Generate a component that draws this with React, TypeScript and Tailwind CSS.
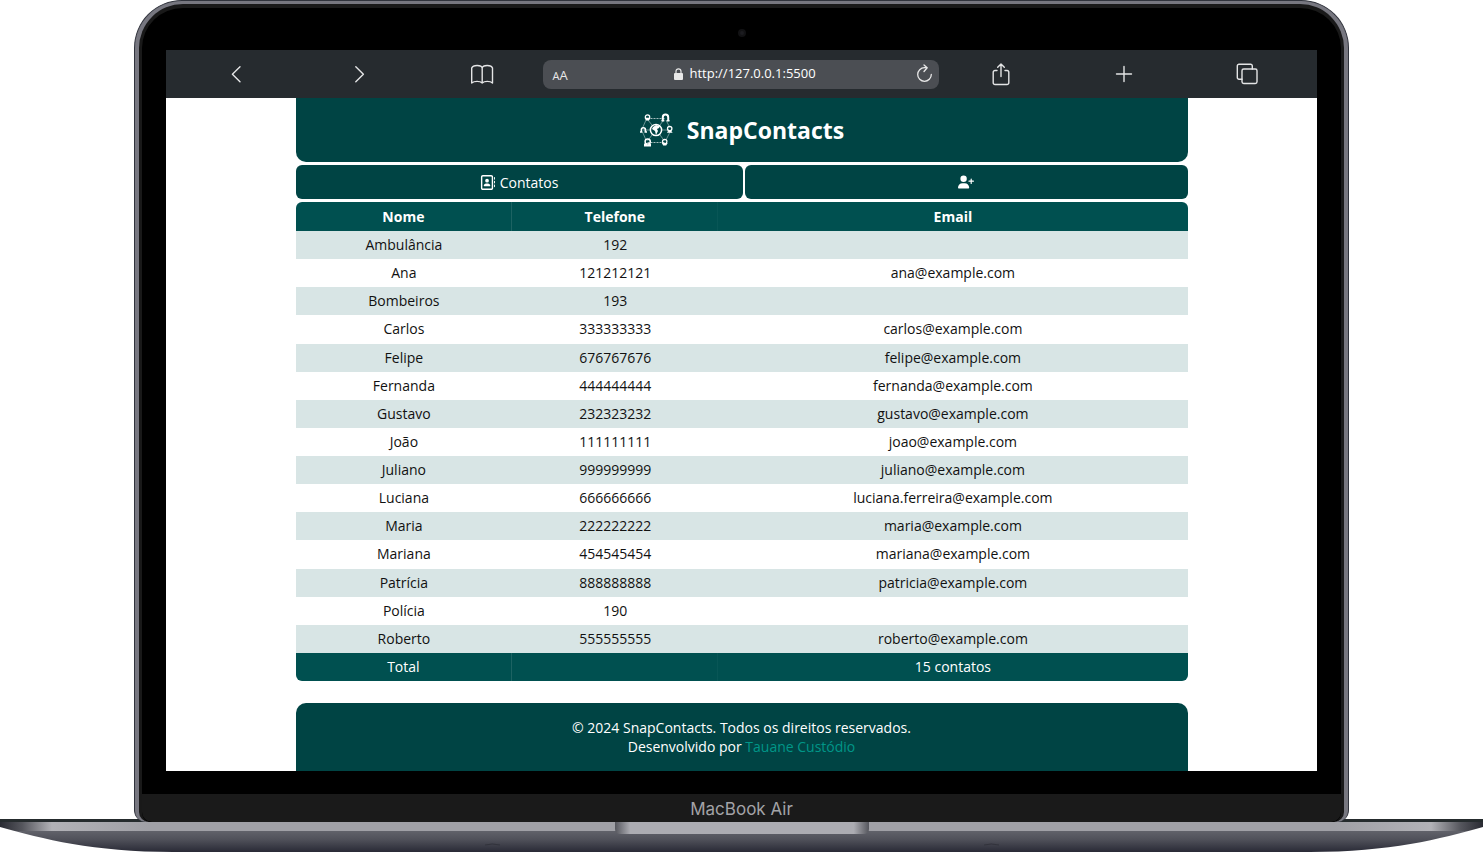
import type { ReactNode } from "react";
import { FaRegAddressBook, FaUserPlus } from "react-icons/fa6";

type Contact = { name: string; phone: string; email: string };

const contacts: Contact[] = [
  { name: "Ambulância", phone: "192", email: "" },
  { name: "Ana", phone: "121212121", email: "ana@example.com" },
  { name: "Bombeiros", phone: "193", email: "" },
  { name: "Carlos", phone: "333333333", email: "carlos@example.com" },
  { name: "Felipe", phone: "676767676", email: "felipe@example.com" },
  { name: "Fernanda", phone: "444444444", email: "fernanda@example.com" },
  { name: "Gustavo", phone: "232323232", email: "gustavo@example.com" },
  { name: "João", phone: "111111111", email: "joao@example.com" },
  { name: "Juliano", phone: "999999999", email: "juliano@example.com" },
  { name: "Luciana", phone: "666666666", email: "luciana.ferreira@example.com" },
  { name: "Maria", phone: "222222222", email: "maria@example.com" },
  { name: "Mariana", phone: "454545454", email: "mariana@example.com" },
  { name: "Patrícia", phone: "888888888", email: "patricia@example.com" },
  { name: "Polícia", phone: "190", email: "" },
  { name: "Roberto", phone: "555555555", email: "roberto@example.com" },
];

function ToolButton({ label, children }: { label: string; children: ReactNode }) {
  return (
    <button type="button" aria-label={label} className="flex h-12 items-center justify-center text-[#e4e5e6]">
      <svg
        width="24"
        height="24"
        viewBox="0 0 24 24"
        fill="none"
        stroke="currentColor"
        strokeWidth="1.4"
        strokeLinecap="round"
        strokeLinejoin="round"
        aria-hidden="true"
      >
        {children}
      </svg>
    </button>
  );
}

function BrowserBar() {
  return (
    <div className="grid h-12 grid-cols-[1fr_1fr_1fr_minmax(0,396px)_1fr_1fr_1fr] items-center bg-[#262b2f] px-2">
      <ToolButton label="Voltar">
        <path d="M16 4.800 8.400 12.300l7.600 7.500" />
      </ToolButton>
      <ToolButton label="Avançar">
        <path d="M8.800 4.800 16.400 12.300l-7.600 7.500" />
      </ToolButton>
      <ToolButton label="Favoritos">
        <path d="M12.200 6C11.500 2.600 3 2.600 1.700 6v15c2.600-2.200 8.200-2.200 10.500 0 2.300-2.200 7.900-2.200 10.300 0V6C21.400 2.600 12.900 2.600 12.200 6v15" />
      </ToolButton>
      <div className="flex h-[29px] items-center rounded-lg bg-[#4b4e53] pr-[6px] pl-[9px] text-[#e8e8e8]">
        <button type="button" aria-label="Tamanho do texto" className="flex w-6 items-baseline pt-1 font-['Open_Sans',sans-serif] text-[13px]">
          <span className="text-[11px]">A</span>A
        </button>
        <label className="flex flex-1 items-center justify-center gap-[6px]">
          <svg width="9" height="12" viewBox="0 0 9 12" aria-hidden="true">
            <rect y="5" width="9" height="7" rx="1" fill="currentColor" />
            <path d="M2 5.500V3.300a2.500 2.500 0 0 1 5 0v2.200" fill="none" stroke="currentColor" strokeWidth="1.200" />
          </svg>
          <input
            aria-label="Endereço"
            readOnly
            value="http://127.0.0.1:5500"
            className="w-[128px] bg-transparent font-['Open_Sans',sans-serif] text-[13px] text-white outline-none"
          />
        </label>
        <button type="button" aria-label="Recarregar">
          <svg
            width="18"
            height="20"
            viewBox="0 0 18 20"
            fill="none"
            stroke="currentColor"
            strokeWidth="1.300"
            strokeLinecap="round"
            strokeLinejoin="round"
            aria-hidden="true"
          >
            <path d="M16.300 10.500a6.800 6.800 0 1 1-6.800-6.800h2.500M9 1l3.200 2.800L9 7.500" />
          </svg>
        </button>
      </div>
      <ToolButton label="Compartilhar">
        <path d="M8 8.500H6A1.800 1.800 0 0 0 4.200 10.300V20.700A1.800 1.800 0 0 0 6 22.500H18A1.800 1.800 0 0 0 19.800 20.700V10.300A1.800 1.800 0 0 0 18 8.500H16M12 14.500V2M8.700 5.300 12 2l3.300 3.300" />
      </ToolButton>
      <ToolButton label="Nova aba">
        <path d="M12 4.500v15M4.500 12h15" />
      </ToolButton>
      <ToolButton label="Abas">
        <path d="M7 17.300H4a1.700 1.700 0 0 1-1.700-1.700V4A1.700 1.700 0 0 1 4 2.300h11.600A1.700 1.700 0 0 1 17.300 4v3" />
        <rect x="7" y="7" width="15" height="14.500" rx="1.700" />
      </ToolButton>
    </div>
  );
}

function NetworkLogo() {
  return (
    <svg width="34" height="34" viewBox="0 0 34 34" fill="none" stroke="white" aria-hidden="true">
      <path d="M8.500 5.500h17M8.500 29.500h17" strokeWidth="1" strokeDasharray="2 1" opacity=".65" />
      <path
        d="M8.500 6.500 13 12M25 6.500 21 12M4 17h8M22 17h8M13 22l-4.500 6M21 22l4.500 6M7 7 3.500 15M27 7l4 8M3.500 19 7 27M31 19l-4 8"
        strokeWidth=".7"
        opacity=".6"
      />
      <circle cx="17" cy="17" r="5.600" strokeWidth="1.500" />
      <path d="m14 14 3-2 4 1-1 2-2 1 1 2-2 4-1-4-3-2z" fill="white" stroke="none" />
      <circle cx="8.500" cy="4" r="2.200" strokeWidth="1.200" />
      <path d="M5.500 4.800h6L10 7.500H7z" fill="white" stroke="none" />
      <path d="M23.800 8V4.200a2.700 2.700 0 0 1 5.400 0V8" strokeWidth="2" />
      <path d="M22.500 7h2.800v1.600h-2.800zM27.700 7h2.800v1.600h-2.800z" fill="white" stroke="none" />
      <path d="M2.400 19v-2.200a2 2 0 0 1 4 0V19M1 19h2.400M5.500 19H8" strokeWidth="1.600" />
      <circle cx="30.700" cy="15.500" r="2.200" strokeWidth="1.300" />
      <path d="M28 19.800c.3-2.700 5.200-2.700 5.500 0z" fill="white" stroke="none" />
      <circle cx="8.700" cy="28.500" r="2.600" strokeWidth="1.500" />
      <path d="M5 33.500v-3h2l1.700 1.200L10.500 30.500H12v3z" fill="white" stroke="none" />
      <circle cx="25.700" cy="28.500" r="2.200" strokeWidth="1.200" />
      <path d="M22.800 30h5.900l-1.500 2.500h-3z" fill="white" stroke="none" />
    </svg>
  );
}

function ContactsTable() {
  return (
    <table className="h-[479px] w-full table-fixed border-separate border-spacing-0 overflow-hidden rounded-md text-center text-[14px] leading-5">
      <colgroup>
        <col className="w-[24.300%]" />
        <col className="w-[23.100%]" />
        <col />
      </colgroup>
      <thead className="bg-[#005050] text-white">
        <tr className="h-[29px]">
          <th scope="col" className="border-r border-[#1d6363]">Nome</th>
          <th scope="col" className="border-r border-[#085656]">Telefone</th>
          <th scope="col">Email</th>
        </tr>
      </thead>
      <tbody className="text-[#111111]">
        {contacts.map((c) => (
          <tr key={c.name} className="odd:bg-[#d8e5e5]">
            <td>{c.name}</td>
            <td>{c.phone}</td>
            <td>{c.email}</td>
          </tr>
        ))}
      </tbody>
      <tfoot className="bg-[#005050] text-white">
        <tr className="h-7">
          <td className="border-r border-[#1d6363]">Total</td>
          <td className="border-r border-[#085656]"></td>
          <td>{contacts.length} contatos</td>
        </tr>
      </tfoot>
    </table>
  );
}

function ContactsApp() {
  return (
    <div className="mx-auto flex w-full max-w-[892px] flex-col font-['Open_Sans',sans-serif]">
      <header className="flex h-16 items-center justify-center gap-[14px] rounded-b-[10px] bg-[#004444] text-white">
        <NetworkLogo />
        <h1 className="text-[23px] leading-8 font-bold">SnapContacts</h1>
      </header>
      <nav className="my-[3px] grid grid-cols-[447fr_443fr] gap-[2px] text-[14px] text-white">
        <button type="button" className="flex h-[34px] items-center justify-center gap-[5px] rounded-md bg-[#004444]">
          <FaRegAddressBook className="size-[15px]" aria-hidden="true" />
          Contatos
        </button>
        <button type="button" aria-label="Adicionar contato" className="flex h-[34px] items-center justify-center rounded-md bg-[#004444]">
          <FaUserPlus className="size-4" aria-hidden="true" />
        </button>
      </nav>
      <main>
        <ContactsTable />
      </main>
      <footer className="mt-[22px] rounded-t-[10px] bg-[#004444] py-[15px] text-center text-[14px] leading-[19px] text-white">
        <p>© 2024 SnapContacts. Todos os direitos reservados.</p>
        <p>
          Desenvolvido por{" "}
          <a href="#autora" className="text-[#009688]">
            Tauane Custódio
          </a>
        </p>
      </footer>
    </div>
  );
}

function LaptopBase() {
  return (
    <svg className="block h-[33px] w-full" viewBox="0 0 1483 33" preserveAspectRatio="none" aria-hidden="true">
      <defs>
        <linearGradient id="deck" x1="0" x2="1" y1="0" y2="0">
          <stop offset="0" stopColor="#292a32" />
          <stop offset=".015" stopColor="#55565d" />
          <stop offset=".035" stopColor="#b2b2b7" />
          <stop offset=".1" stopColor="#a0a0a6" />
          <stop offset=".9" stopColor="#a0a0a6" />
          <stop offset=".965" stopColor="#b2b2b7" />
          <stop offset=".985" stopColor="#55565d" />
          <stop offset="1" stopColor="#292a32" />
        </linearGradient>
        <linearGradient id="belly" x1="0" x2="0" y1="0" y2="1">
          <stop offset="0" stopColor="#61626a" />
          <stop offset=".4" stopColor="#50515a" />
          <stop offset="1" stopColor="#292a36" />
        </linearGradient>
        <linearGradient id="notch" x1="0" x2="1" y1="0" y2="0">
          <stop offset="0" stopColor="#55565d" />
          <stop offset=".06" stopColor="#acacb2" />
          <stop offset=".94" stopColor="#acacb2" />
          <stop offset="1" stopColor="#55565d" />
        </linearGradient>
        <clipPath id="hull">
          <path d="M0 0H1483V8C1440 20 1390 33 1310 33H173C93 33 43 20 0 8z" />
        </clipPath>
      </defs>
      <g clipPath="url(#hull)">
        <rect width="1483" height="4" fill="#252b2d" />
        <rect y="3" width="1483" height="9" fill="url(#deck)" />
        <rect y="12" width="1483" height="21" fill="url(#belly)" />
        <path d="M615 3h254v7q0 5-6 5H621q-6 0-6-5z" fill="url(#notch)" />
        <path d="M485 26q7-2 15 0M984 26q7-2 15 0" fill="none" stroke="#32333c" strokeWidth="1" />
      </g>
    </svg>
  );
}

export default function App() {
  return (
    <div className="flex min-h-screen flex-col overflow-hidden bg-white">
      <div className="relative z-10 mx-auto -mb-[3px] w-full max-w-[1215px] overflow-hidden rounded-t-[48px] rounded-b-[12px] border border-b-0 border-[#30333c] bg-[#777780] px-1 pt-[3px]">
        <div className="rounded-t-[44px] rounded-b-[10px] border-x-[3px] border-t-[4px] border-[#191919] bg-black">
          <div className="flex h-[42px] items-center justify-center pt-2">
            <span className="size-2 rounded-full border-2 border-[#121214] bg-[#1c1c20]" />
          </div>
          <div className="mx-6 bg-white">
            <BrowserBar />
            <ContactsApp />
          </div>
          <div className="h-[23px]" />
          <div className="flex h-7 items-center justify-center rounded-b-[10px] bg-[#1a1a1a] pt-1 font-['Inter',sans-serif] text-[17px] text-[#a3a3a7]">
            MacBook Air
          </div>
        </div>
      </div>
      <LaptopBase />
    </div>
  );
}
